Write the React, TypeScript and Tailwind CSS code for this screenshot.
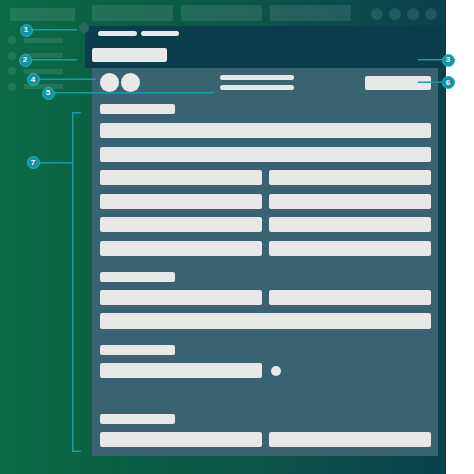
import React from "react";

const Bar = ({ className }: { className: string }) => (
  <div className={`bg-[#e8e8e9] rounded-[2px] ${className}`} />
);

const Badge = ({ n, x, y }: { n: string; x: number; y: number }) => (
  <div
    className="absolute w-[13px] h-[13px] rounded-full bg-[#1493a0] border border-[#2fb0ba] text-white text-[8px] font-bold leading-none flex items-center justify-center"
    style={{ left: x - 6.5, top: y - 6.5 }}
  >
    {n}
  </div>
);

export default function App() {
  return (
    <div
      className="relative w-[474px] h-[474px] bg-white overflow-hidden"
      style={{ fontFamily: '"Liberation Sans", Arial, sans-serif' }}
    >
      <div className="w-[446px] h-[474px] flex flex-col bg-[linear-gradient(90deg,#0c6b47_0%,#0a6243_20%,#0b5648_55%,#0b4050_100%)]">
        {/* top bar */}
        <div className="h-[26px] flex items-start pl-[10px] shrink-0">
          <div className="mt-[8px] w-[65px] h-[13px] bg-white/10 rounded-[1px]" />
          <div className="ml-[17px] mt-[5px] flex gap-2">
            <div className="w-[81px] h-[16px] bg-white/10 rounded-[1px]" />
            <div className="w-[81px] h-[16px] bg-white/10 rounded-[1px]" />
            <div className="w-[81px] h-[16px] bg-white/10 rounded-[1px]" />
          </div>
          <div className="ml-[20px] mt-[8px] flex gap-[6px]">
            <div className="w-[12px] h-[12px] rounded-full bg-white/10" />
            <div className="w-[12px] h-[12px] rounded-full bg-white/10" />
            <div className="w-[12px] h-[12px] rounded-full bg-white/10" />
            <div className="w-[12px] h-[12px] rounded-full bg-white/10" />
          </div>
        </div>

        {/* body */}
        <div className="flex flex-1">
          {/* sidebar */}
          <div className="w-[85px] shrink-0 pt-[10px] pl-[8px] flex flex-col gap-[7.5px]">
            {[0, 1, 2, 3].map((i) => (
              <div key={i} className="h-[8px] flex items-center gap-[8px]">
                <div className="w-[8px] h-[8px] rounded-full bg-white/10" />
                <div className="w-[39px] h-[5px] bg-white/10" />
              </div>
            ))}
          </div>

          {/* main */}
          <div className="flex-1 flex flex-col">
            <div className="h-[42px] bg-[#0b3d4c] flex flex-col pt-[5px] pl-[7px]">
              <div className="ml-[6px] flex gap-[4px]">
                <div className="w-[39px] h-[5px] rounded-full bg-[#e8e8e9]" />
                <div className="w-[38px] h-[5px] rounded-full bg-[#e8e8e9]" />
              </div>
              <Bar className="mt-[12px] w-[75px] h-[14px]" />
            </div>

            <div className="ml-[7px] mr-[8px] h-[388px] bg-[#396370] pl-[8px] pr-[7px] pt-[5px] flex flex-col">
              {/* panel top row */}
              <div className="h-[19px] flex items-center">
                <div className="w-[19px] h-[19px] rounded-full bg-[#e8e8e9]" />
                <div className="ml-[2px] w-[19px] h-[19px] rounded-full bg-[#e8e8e9]" />
                <div className="ml-[80px] w-[74px] flex flex-col gap-[5px]">
                  <div className="h-[5px] rounded-full bg-[#e8e8e9]" />
                  <div className="h-[5px] rounded-full bg-[#e8e8e9]" />
                </div>
                <div className="flex-1" />
                <Bar className="w-[66px] h-[14px]" />
              </div>

              {/* section 1 */}
              <Bar className="mt-[12px] w-[75px] h-[10px]" />
              <div className="mt-[9px] flex flex-col gap-[8.5px]">
                <Bar className="h-[15px]" />
                <Bar className="h-[15px]" />
                <div className="grid grid-cols-2 gap-x-[7px] gap-y-[8.5px]">
                  <Bar className="h-[15px]" />
                  <Bar className="h-[15px]" />
                  <Bar className="h-[15px]" />
                  <Bar className="h-[15px]" />
                  <Bar className="h-[15px]" />
                  <Bar className="h-[15px]" />
                  <Bar className="h-[15px]" />
                  <Bar className="h-[15px]" />
                </div>
              </div>

              {/* section 2 */}
              <Bar className="mt-[16.5px] w-[75px] h-[10px]" />
              <div className="mt-[8px] flex flex-col gap-[8px]">
                <div className="grid grid-cols-2 gap-x-[7px]">
                  <Bar className="h-[15px]" />
                  <Bar className="h-[15px]" />
                </div>
                <Bar className="h-[16px]" />
              </div>

              {/* section 3 */}
              <Bar className="mt-[16px] w-[75px] h-[10px]" />
              <div className="mt-[8px] flex items-center">
                <Bar className="w-[162px] h-[15px]" />
                <div className="ml-[9px] w-[10px] h-[10px] rounded-full bg-[#e8e8e9]" />
              </div>

              {/* section 4 */}
              <Bar className="mt-[36px] w-[75px] h-[10px]" />
              <div className="mt-[8px] grid grid-cols-2 gap-x-[7px]">
                <Bar className="h-[15px]" />
                <Bar className="h-[15px]" />
              </div>
            </div>
          </div>
        </div>
      </div>

      {/* collapse knob */}
      <div className="absolute left-[79px] top-[23px] w-[10px] h-[10px] rounded-full bg-[#2a6a5c]" />

      {/* annotation lines */}
      <svg className="absolute left-0 top-0 pointer-events-none" width="474" height="474" viewBox="0 0 474 474">
        <g stroke="#1a9ba6" strokeWidth="1.5" fill="none">
          <line x1="32" y1="29.75" x2="77" y2="29.75" />
          <line x1="31" y1="59.75" x2="77" y2="59.75" />
          <line x1="39" y1="79.25" x2="96" y2="79.25" />
          <line x1="54" y1="92.75" x2="214" y2="92.75" />
          <line x1="418" y1="59.75" x2="442" y2="59.75" />
          <line x1="418" y1="82.25" x2="442" y2="82.25" />
          <line x1="38" y1="162.75" x2="72.5" y2="162.75" />
          <polyline points="81,112.75 72.75,112.75 72.75,451.25 81,451.25" />
        </g>
      </svg>

      <Badge n="1" x={26} y={30} />
      <Badge n="2" x={25} y={60} />
      <Badge n="4" x={33} y={79.5} />
      <Badge n="5" x={48} y={93} />
      <Badge n="3" x={448} y={60} />
      <Badge n="6" x={448} y={82.5} />
      <Badge n="7" x={33} y={162.5} />
    </div>
  );
}
